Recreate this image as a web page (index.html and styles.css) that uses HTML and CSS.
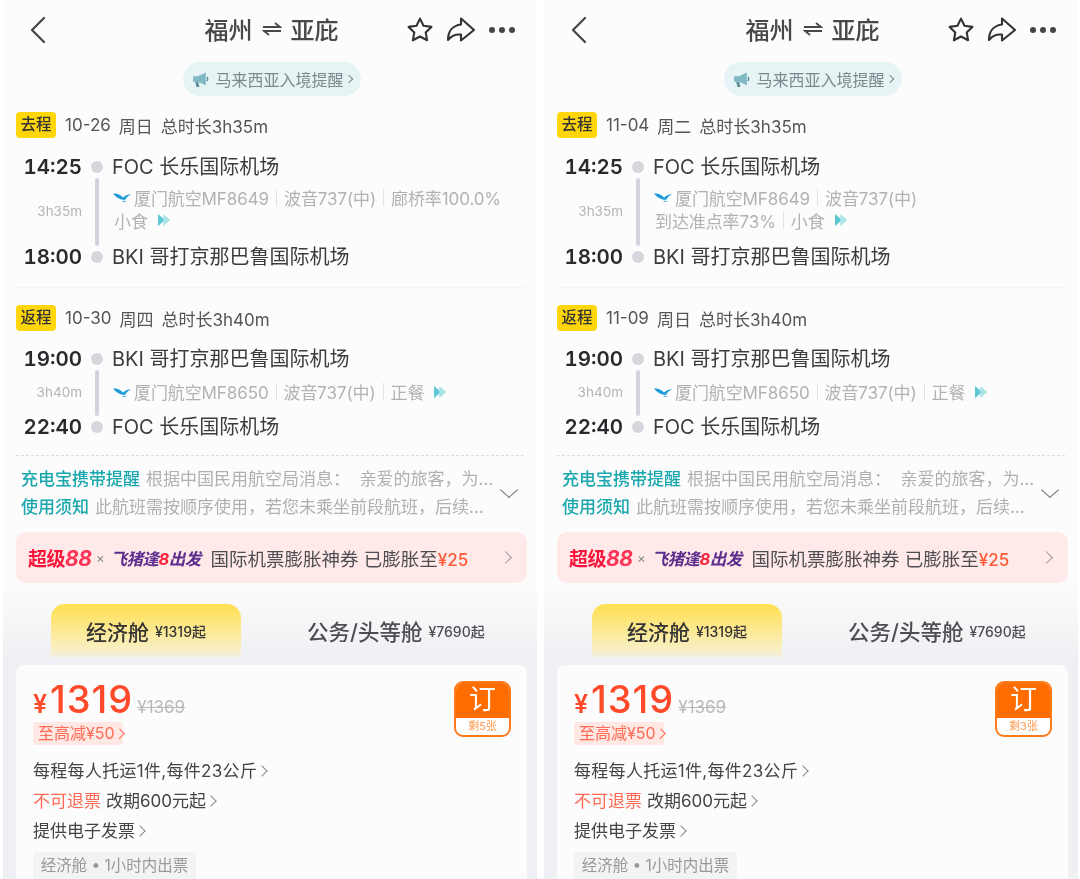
FILE: index.html
```html
<!DOCTYPE html>
<html lang="zh">
<head>
<meta charset="utf-8">
<title>福州 - 亚庇</title>
<link rel="stylesheet" href="styles.css">
</head>
<body>
<svg width="0" height="0" class="defs">
  <symbol id="back" viewBox="0 0 16 28"><path d="M14 2 2 14l12 12" fill="none" stroke="currentColor" stroke-width="2.2" stroke-linecap="round" stroke-linejoin="round"/></symbol>
  <symbol id="star" viewBox="0 0 28 28"><path d="M14 2.6l3.5 7.2 7.9 1.1-5.7 5.5 1.4 7.9-7.1-3.8-7.1 3.8 1.4-7.9-5.7-5.5 7.9-1.1z" fill="none" stroke="currentColor" stroke-width="2.1" stroke-linejoin="round"/></symbol>
  <symbol id="share" viewBox="0 0 30 28"><path d="M16 2.500 29 14 16 24.500v-6c-6-.5-10 1.500-13 5.500 0-9 5-14.500 13-15.500z" fill="none" stroke="currentColor" stroke-width="2.100" stroke-linejoin="round"/></symbol>
  <symbol id="swap" viewBox="0 0 20 14"><path d="M1 5h17l-5-4M19 9H2l5 4" fill="none" stroke="currentColor" stroke-width="1.800"/></symbol>
  <symbol id="horn" viewBox="0 0 16 16"><path d="M1 5h4.500L13 1.500v12L5.500 10H1z" fill="#7fb9c4"/><path d="M3 10l1.200 5h2.800l-1.200-5z" fill="#5c8f9b"/><path d="M14 5.500q1.500 2 0 4" fill="none" stroke="#5c8f9b" stroke-width="1.300"/></symbol>
  <symbol id="plane" viewBox="0 0 18 12"><path d="M0 2.500c4.500-.5 8 1.500 10 4 2-1.800 4.500-3 8-3.500-2.500 1.500-4.500 3-5.500 5.500C10.500 9.500 4 8 0 2.500z" fill="#1d9bd7"/><path d="M10.500 9.500l4 1.500-5.500-.5z" fill="#1d9bd7"/></symbol>
  <symbol id="meal" viewBox="0 0 16 14"><path d="M0 0l8 7-8 7z" fill="#5cc8d2"/><path d="M6 0l8 7-8 7z" fill="#a9e4e8"/></symbol>
</svg>
<main class="screens">

<section class="phone">
  <header class="top">
    <svg class="ic-back"><use href="#back"/></svg>
    <h1 class="title">福州<svg class="ic-swap"><use href="#swap"/></svg>亚庇</h1>
    <div class="actions">
      <svg class="ic-star"><use href="#star"/></svg>
      <svg class="ic-share"><use href="#share"/></svg>
      <div class="dots"><i></i><i></i><i></i></div>
    </div>
  </header>
  <div class="chip-row"><div class="chip"><svg class="ic-horn"><use href="#horn"/></svg>马来西亚入境提醒<span class="chip-arrow"></span></div></div>

  <div class="leg leg-first">
    <div class="leg-head"><span class="tag">去程</span><span class="date">10-26</span><span class="date">周日</span><span>总时长3h35m</span></div>
    <div class="tl">
      <b class="time">14:25</b><span class="dot"></span><span class="port">FOC 长乐国际机场</span>
      <span class="dur">3h35m</span><span class="bar"></span>
      <div class="meta meta-tall">
        <div class="meta-line"><svg class="ic-plane"><use href="#plane"/></svg><span>厦门航空MF8649</span><i class="sep"></i><span>波音737(中)</span><i class="sep"></i><span>廊桥率100.0%</span></div>
        <div class="meta-line"><span>小食</span><svg class="ic-meal"><use href="#meal"/></svg></div>
      </div>
      <b class="time">18:00</b><span class="dot"></span><span class="port">BKI 哥打京那巴鲁国际机场</span>
    </div>
  </div>
  <div class="leg leg-second">
    <div class="leg-head"><span class="tag">返程</span><span class="date">10-30</span><span class="date">周四</span><span>总时长3h40m</span></div>
    <div class="tl">
      <b class="time">19:00</b><span class="dot"></span><span class="port">BKI 哥打京那巴鲁国际机场</span>
      <span class="dur">3h40m</span><span class="bar"></span>
      <div class="meta">
        <div class="meta-line"><svg class="ic-plane"><use href="#plane"/></svg><span>厦门航空MF8650</span><i class="sep"></i><span>波音737(中)</span><i class="sep"></i><span>正餐</span><svg class="ic-meal"><use href="#meal"/></svg></div>
      </div>
      <b class="time">22:40</b><span class="dot"></span><span class="port">FOC 长乐国际机场</span>
    </div>
  </div>

  <div class="notices">
    <div class="notice-text">
      <p class="notice"><b>充电宝携带提醒</b>根据中国民用航空局消息： &nbsp;亲爱的旅客，为…</p>
      <p class="notice"><b>使用须知</b>此航班需按顺序使用，若您未乘坐前段航班，后续…</p>
    </div>
    <span class="fold"></span>
  </div>

  <div class="promo">
    <span class="promo-a">超级<em>88</em></span><span class="promo-x">×</span><span class="promo-b">飞猪逢<em>8</em>出发</span>
    <span class="promo-text">国际机票膨胀神券 已膨胀至<b>¥25</b></span>
    <span class="promo-arrow"></span>
  </div>

  <div class="lower">
    <div class="tabs">
      <div class="tab tab-on"><strong>经济舱</strong><small>¥1319起</small></div>
      <div class="tab tab-off"><strong>公务/头等舱</strong><small>¥7690起</small></div>
    </div>
    <div class="card">
      <div class="price-row"><span class="yen">¥</span><span class="price">1319</span><s class="old">¥1369</s></div>
      <div class="cut">至高减¥50<span class="arrow arrow-cut"></span></div>
      <p class="rule rule-first">每程每人托运1件,每件23公斤<span class="arrow"></span></p>
      <p class="rule"><em>不可退票</em>改期600元起<span class="arrow"></span></p>
      <p class="rule">提供电子发票<span class="arrow"></span></p>
      <div class="cabin">经济舱 • 1小时内出票</div>
      <div class="book"><span class="book-top">订</span><span class="book-left">剩5张</span></div>
    </div>
  </div>
</section>

<section class="phone">
  <header class="top">
    <svg class="ic-back"><use href="#back"/></svg>
    <h1 class="title">福州<svg class="ic-swap"><use href="#swap"/></svg>亚庇</h1>
    <div class="actions">
      <svg class="ic-star"><use href="#star"/></svg>
      <svg class="ic-share"><use href="#share"/></svg>
      <div class="dots"><i></i><i></i><i></i></div>
    </div>
  </header>
  <div class="chip-row"><div class="chip"><svg class="ic-horn"><use href="#horn"/></svg>马来西亚入境提醒<span class="chip-arrow"></span></div></div>

  <div class="leg leg-first">
    <div class="leg-head"><span class="tag">去程</span><span class="date">11-04</span><span class="date">周二</span><span>总时长3h35m</span></div>
    <div class="tl">
      <b class="time">14:25</b><span class="dot"></span><span class="port">FOC 长乐国际机场</span>
      <span class="dur">3h35m</span><span class="bar"></span>
      <div class="meta meta-tall">
        <div class="meta-line"><svg class="ic-plane"><use href="#plane"/></svg><span>厦门航空MF8649</span><i class="sep"></i><span>波音737(中)</span></div>
        <div class="meta-line"><span>到达准点率73%</span><i class="sep"></i><span>小食</span><svg class="ic-meal"><use href="#meal"/></svg></div>
      </div>
      <b class="time">18:00</b><span class="dot"></span><span class="port">BKI 哥打京那巴鲁国际机场</span>
    </div>
  </div>
  <div class="leg leg-second">
    <div class="leg-head"><span class="tag">返程</span><span class="date">11-09</span><span class="date">周日</span><span>总时长3h40m</span></div>
    <div class="tl">
      <b class="time">19:00</b><span class="dot"></span><span class="port">BKI 哥打京那巴鲁国际机场</span>
      <span class="dur">3h40m</span><span class="bar"></span>
      <div class="meta">
        <div class="meta-line"><svg class="ic-plane"><use href="#plane"/></svg><span>厦门航空MF8650</span><i class="sep"></i><span>波音737(中)</span><i class="sep"></i><span>正餐</span><svg class="ic-meal"><use href="#meal"/></svg></div>
      </div>
      <b class="time">22:40</b><span class="dot"></span><span class="port">FOC 长乐国际机场</span>
    </div>
  </div>

  <div class="notices">
    <div class="notice-text">
      <p class="notice"><b>充电宝携带提醒</b>根据中国民用航空局消息： &nbsp;亲爱的旅客，为…</p>
      <p class="notice"><b>使用须知</b>此航班需按顺序使用，若您未乘坐前段航班，后续…</p>
    </div>
    <span class="fold"></span>
  </div>

  <div class="promo">
    <span class="promo-a">超级<em>88</em></span><span class="promo-x">×</span><span class="promo-b">飞猪逢<em>8</em>出发</span>
    <span class="promo-text">国际机票膨胀神券 已膨胀至<b>¥25</b></span>
    <span class="promo-arrow"></span>
  </div>

  <div class="lower">
    <div class="tabs">
      <div class="tab tab-on"><strong>经济舱</strong><small>¥1319起</small></div>
      <div class="tab tab-off"><strong>公务/头等舱</strong><small>¥7690起</small></div>
    </div>
    <div class="card">
      <div class="price-row"><span class="yen">¥</span><span class="price">1319</span><s class="old">¥1369</s></div>
      <div class="cut">至高减¥50<span class="arrow arrow-cut"></span></div>
      <p class="rule rule-first">每程每人托运1件,每件23公斤<span class="arrow"></span></p>
      <p class="rule"><em>不可退票</em>改期600元起<span class="arrow"></span></p>
      <p class="rule">提供电子发票<span class="arrow"></span></p>
      <div class="cabin">经济舱 • 1小时内出票</div>
      <div class="book"><span class="book-top">订</span><span class="book-left">剩3张</span></div>
    </div>
  </div>
</section>

</main>
</body>
</html>
```
FILE: styles.css
```css
* { box-sizing: border-box; margin: 0; padding: 0; }
html, body { width: 1080px; height: 879px; overflow: hidden; background: #fff; }
body { font-family: Inter, "Noto Sans CJK SC", sans-serif; color: #444; }
.defs { position: absolute; }
.screens { display: flex; gap: 7px; padding-left: 3px; height: 879px; }
.phone { width: 534px; height: 879px; background: #fcfcfc; overflow: hidden; display: flex; flex-direction: column; filter: blur(0.45px); }
.phone > * { flex-shrink: 0; }

.top { height: 60px; position: relative; display: flex; align-items: center; justify-content: center; padding-bottom: 4px; }
.ic-back { position: absolute; left: 27px; top: 16px; width: 16px; height: 28px; color: #444; }
.title { font-size: 24px; font-weight: 500; color: #484848; display: flex; align-items: center; margin-left: 3px; }
.ic-swap { width: 20px; height: 14px; margin: 1px 9px 0; color: #484848; }
.actions { position: absolute; left: 403px; top: 16px; display: flex; align-items: center; }
.ic-star { width: 28px; height: 28px; color: #333; }
.ic-share { width: 30px; height: 28px; margin-left: 11px; color: #333; }
.dots { display: flex; gap: 4px; margin-left: 14px; }
.dots i { width: 6px; height: 6px; border-radius: 50%; background: #444; }

.chip-row { display: flex; justify-content: center; margin-top: 2px; }
.chip { height: 34px; width: 178px; margin-left: 4px; border-radius: 17px; background: #e6f4f5; color: #7d8a8d; font-size: 16px; display: flex; align-items: center; justify-content: center; }
.ic-horn { width: 17px; height: 17px; margin-right: 6px; }
.chip-arrow { width: 6px; height: 6px; margin-left: 2px; border-top: 1.500px solid #7d8a8d; border-right: 1.500px solid #7d8a8d; transform: rotate(45deg); }

.leg { margin: 0 13px; }
.leg-first { margin-top: 16px; height: 176px; border-bottom: 1px solid #f3f3f3; }
.leg-head { height: 26px; display: flex; align-items: center; font-size: 17px; color: #555; }
.leg-second { margin-top: 17px; height: 150px; }
.tag { width: 40px; height: 26px; border-radius: 4px; background: #ffd60a; color: #333; font-size: 15.500px; font-weight: 500; text-align: center; line-height: 26px; margin-right: 9px; }
.date { margin-right: 8px; }
.leg-first .tl { margin-top: 14px; }
.leg-second .tl { margin-top: 13px; }
.tl { display: grid; grid-template-columns: 66px 30px 1fr; align-items: center; }
.time { font-size: 20.500px; font-weight: 600; font-variant-numeric: tabular-nums; color: #2a2a2e; text-align: right; height: 30px; line-height: 30px; }
.dot { width: 12px; height: 12px; border-radius: 50%; background: #d6d7dd; justify-self: center; }
.port { font-size: 20px; color: #3c3c40; line-height: 30px; height: 30px; white-space: nowrap; }
.dur { font-size: 13.500px; color: #b4b4b4; text-align: right; padding-bottom: 2px; }
.bar { width: 4px; border-radius: 2px; background: #d2d3dd; justify-self: center; align-self: stretch; margin: -4px 0; }
.meta { height: 38px; display: flex; flex-direction: column; justify-content: center; padding-bottom: 3px; }
.meta-tall { height: 60px; padding-bottom: 7px; }
.meta-line { display: flex; align-items: center; height: 23px; font-size: 17px; letter-spacing: -0.100px; color: #b2b2b2; white-space: nowrap; padding-left: 2px; }
.ic-plane { width: 18px; height: 12px; margin: 0 3px 0 -1px; }
.ic-meal { width: 14px; height: 14px; margin-left: 10px; }
.sep { width: 1px; height: 17px; background: #e2e2e2; margin: 0 7px; }

.notices { margin: 0 13px; border-top: 1px dashed #dedede; height: 77px; padding: 9px 0 0 5px; position: relative; }
.notice { font-size: 17px; line-height: 28px; color: #b0b0b0; white-space: nowrap; }
.notice b { font-weight: 500; color: #19a7ad; margin-right: 6px; }
.fold { position: absolute; left: 487px; top: 28px; width: 12px; height: 12px; border-right: 1.600px solid #777; border-bottom: 1.600px solid #777; transform: rotate(45deg) skew(-4deg, -4deg); }

.promo { margin: 0 10px 0 13px; height: 51px; background: #ffe9e9; border-radius: 10px; display: flex; align-items: center; padding-left: 12px; position: relative; }
.promo em { font-style: italic; font-weight: 700; }
.promo-a { font-size: 19px; font-weight: 700; color: #f8153a; letter-spacing: -0.500px; width: 62px; white-space: nowrap; }
.promo-a em { color: #ff3355; font-size: 21px; }
.promo-x { color: #888; font-size: 13px; margin: 0 6px; }
.promo-b { font-size: 16.500px; font-weight: 700; font-style: italic; color: #5b2d8c; width: 91px; white-space: nowrap; letter-spacing: -0.500px; }
.promo-b em { color: #f8253f; }
.promo-text { font-size: 18.500px; color: #4e4e52; margin-left: 9px; white-space: nowrap; }
.promo-text b { color: #ff5a36; font-weight: 500; font-size: 17px; }
.promo-arrow { position: absolute; right: 17px; top: 21px; width: 9px; height: 9px; border-top: 1.500px solid #999; border-right: 1.500px solid #999; transform: rotate(45deg); }

.lower { flex: 1; padding-top: 21px; background: linear-gradient(#fcfcfc, #eff0f3 75px); }
.tabs { display: flex; height: 53px; padding-left: 48px; }
.tab { display: flex; align-items: center; white-space: nowrap; }
.tab strong { font-weight: 500; }
.tab small { font-size: 14px; font-weight: 500; margin-left: 6px; }
.tab-on { width: 190px; justify-content: center; border-radius: 14px 14px 0 0; background: linear-gradient(#ffe04f, #f9efc3 85%, #f3eee0); color: #333; }
.tab-on strong { font-size: 21px; }
.tab-off { margin-left: 66px; color: #4e4e52; }
.tab-off strong { font-size: 21.500px; }
.card { margin: 8px 10px 0 13px; height: 230px; background: #fcfcfc; border-radius: 8px 8px 0 0; padding: 16px 17px 0; position: relative; }
.price-row { display: flex; align-items: baseline; height: 36px; color: #ff4a2a; line-height: 36px; }
.yen { font-size: 25px; font-weight: 600; width: 17px; }
.price { font-size: 38px; font-weight: 500; letter-spacing: 1px; }
.old { font-size: 17px; color: #b9b9b9; margin-left: 4px; }
.cut { margin-top: 5px; width: 90px; height: 23px; background: #ffe8e4; border-radius: 3px; font-size: 16px; line-height: 23px; color: #ff6a55; padding-left: 5px; white-space: nowrap; display: flex; align-items: center; }
.rule { font-size: 17px; line-height: 30px; height: 30px; color: #444; white-space: nowrap; display: flex; align-items: center; }
.rule-first { margin-top: 11px; letter-spacing: 0.300px; }
.rule em { font-style: normal; color: #ff6a55; margin-right: 5px; }
.arrow { width: 8px; height: 8px; margin-left: 1px; border-top: 1.300px solid #8a8a8a; border-right: 1.300px solid #8a8a8a; transform: rotate(45deg); }
.arrow-cut { border-color: #ff6a55; }
.cabin { margin-top: 6px; width: 163px; height: 28px; background: #f2f3f5; border-radius: 4px; font-size: 15.500px; line-height: 28px; color: #999; text-align: center; white-space: nowrap; }
.book { position: absolute; right: 16px; top: 16px; width: 57px; height: 56px; border: 2px solid #ff7a1a; border-radius: 9px; overflow: hidden; display: flex; flex-direction: column; background: #fff; }
.book-top { height: 35px; flex-shrink: 0; background: #ff6c00; color: #fff; font-size: 27px; line-height: 34px; text-align: center; }
.book-left { flex: 1; font-size: 11px; line-height: 17px; color: #ff9a50; text-align: center; }
```
